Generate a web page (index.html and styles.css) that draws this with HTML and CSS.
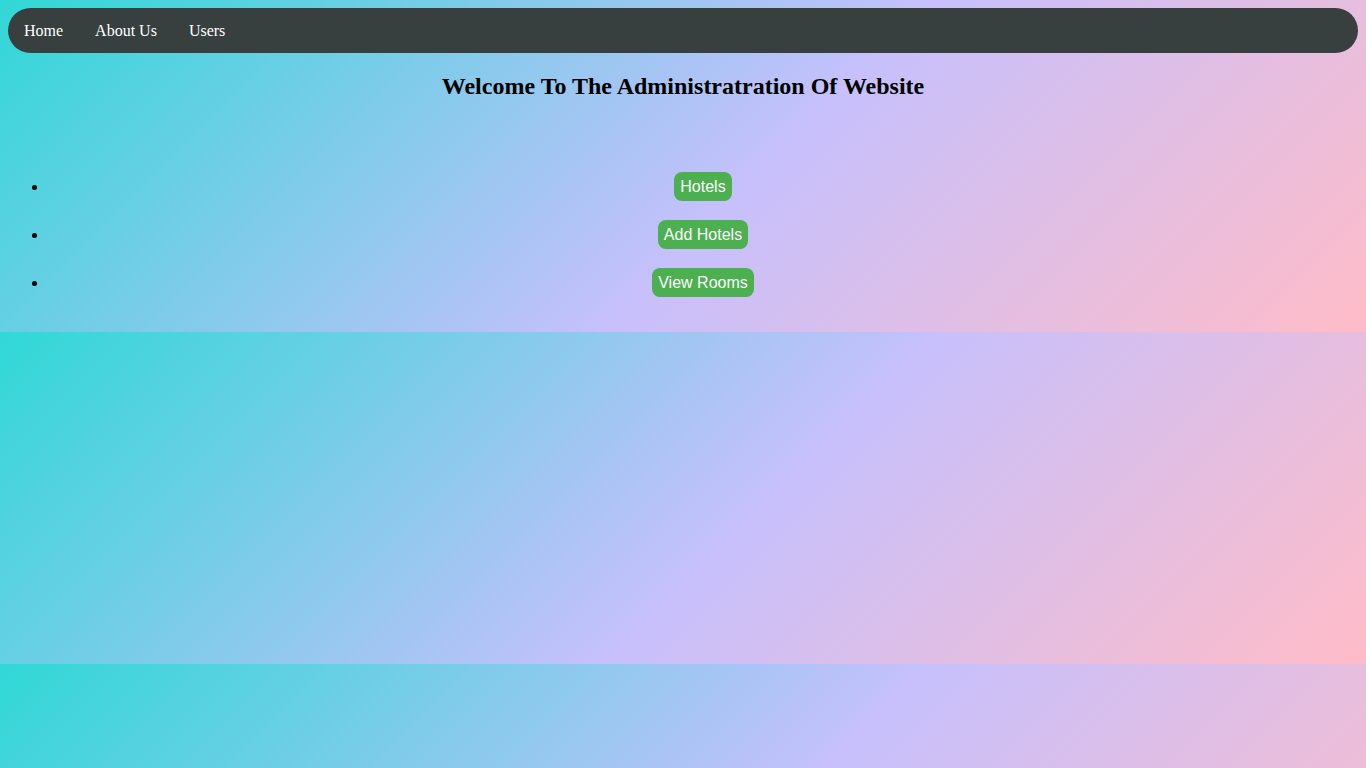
FILE: index.html
```html
<!DOCTYPE html>
<html lang="en">
<head>
<meta charset="utf-8">
<title>Admin</title>
<link rel="stylesheet" href="styles.css">
</head>
<body>
<nav class="topnav">
  <ul class="topnav-list">
    <li><a href="#">Home</a></li>
    <li><a href="#">About Us</a></li>
    <li><a href="#">Users</a></li>
  </ul>
</nav>
<h2 class="title">Welcome To The Administratration Of Website</h2>
<ul class="actions">
  <li><a class="btn" href="#">Hotels</a></li>
  <li><a class="btn" href="#">Add Hotels</a></li>
  <li><a class="btn" href="#">View Rooms</a></li>
</ul>
</body>
</html>
```

FILE: styles.css
```css
body {
  margin: 8px;
  font-family: "Liberation Serif", "Times New Roman", serif;
  background: linear-gradient(135deg, #30d8d6 0%, #c7c0fc 55%, #ffbcc8 100%);
}

.topnav {
  background: #373f3f;
  border-radius: 23px;
  height: 45px;
}

.topnav-list {
  list-style: none;
  margin: 0;
  padding: 0;
  display: flex;
  height: 100%;
  align-items: center;
}

.topnav-list a {
  display: block;
  color: #ffffff;
  text-decoration: none;
  font-size: 16px;
  padding: 0 16px;
}

.title {
  text-align: center;
  font-size: 24px;
  margin: 20px 0;
}

.actions {
  margin: 63px 0 17px;
  padding-left: 40px;
}

.actions li {
  text-align: center;
  line-height: 48px;
  font-size: 16px;
}

.btn {
  display: inline-block;
  vertical-align: baseline;
  font-family: "Liberation Sans", Arial, sans-serif;
  font-size: 16px;
  line-height: 19px;
  padding: 5px 6px;
  color: #ffffff;
  background: #4caf50;
  border-radius: 8px;
  text-decoration: none;
}
```
